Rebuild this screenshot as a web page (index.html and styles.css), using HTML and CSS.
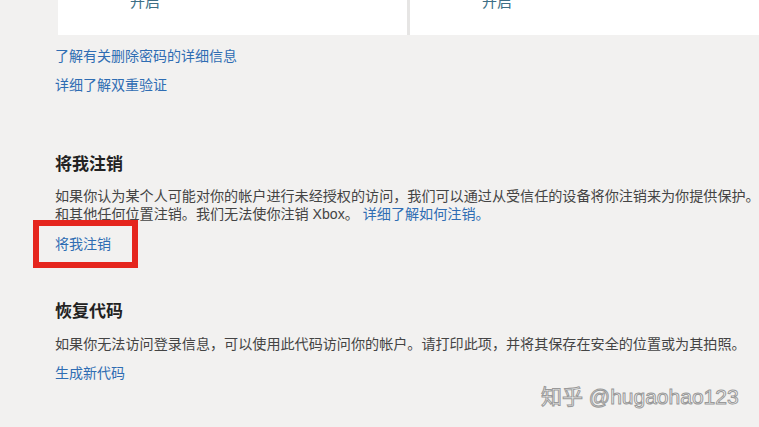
FILE: index.html
```html
<!DOCTYPE html>
<html lang="zh-CN">
<head>
  <meta charset="UTF-8">
  <meta name="viewport" content="width=device-width, initial-scale=1.0">
  <title>安全设置</title>
  <link rel="stylesheet" href="styles.css">
</head>
<body>
  <div class="page">
    <div class="card-row">
      <div class="card">
        <a class="card-link" href="#">开启</a>
      </div>
      <div class="card card-wide">
        <a class="card-link" href="#">开启</a>
      </div>
    </div>

    <div class="content">
      <a class="link first" href="#">了解有关删除密码的详细信息</a>
      <a class="link" href="#">详细了解双重验证</a>

      <section class="block">
        <h2>将我注销</h2>
        <p class="desc">如果你认为某个人可能对你的帐户进行未经授权的访问，我们可以通过从受信任的设备将你注销来为你提供保护。这将使你从所有设备、浏览器和其他任何位置注销。我们无法使你注销 Xbox。 <a href="#">详细了解如何注销。</a></p>
        <div class="highlight">
          <a class="link" href="#">将我注销</a>
        </div>
      </section>

      <section class="block block-second">
        <h2>恢复代码</h2>
        <p class="desc">如果你无法访问登录信息，可以使用此代码访问你的帐户。请打印此项，并将其保存在安全的位置或为其拍照。</p>
        <a class="link" href="#">生成新代码</a>
      </section>
    </div>
  </div>

  <div class="watermark">知乎 @hugaohao123</div>
</body>
</html>
```

FILE: styles.css
```css
html,
body {
  overflow: hidden;
}

body {
  margin: 0;
  padding: 0;
  background-color: #f2f1f0;
  font-family: "Liberation Sans", "Noto Sans CJK SC", sans-serif;
  font-size: 14px;
  color: #444;
  height: 427px;
  position: relative;
}

a {
  color: #2f6db3;
  text-decoration: none;
}

.card-row {
  display: flex;
  gap: 3px;
  margin-left: 58px;
  height: 35px;
  background-color: #e6e5e4;
}

.card {
  background-color: #fff;
  width: 351px;
  padding-left: 72px;
  box-sizing: border-box;
}

.card-wide {
  flex-grow: 1;
}

.card-link {
  display: block;
  margin-top: -8px;
  line-height: 20px;
  font-size: 15px;
  color: #3d6f86;
}

.content {
  padding-left: 55px;
}

.link {
  display: block;
  line-height: 20px;
  margin-top: 9px;
}

.link.first {
  margin-top: 11px;
}

.block {
  margin-top: 58px;
}

.block-second {
  margin-top: 32px;
}

h2 {
  margin: 0;
  font-size: 17px;
  line-height: 24px;
  font-weight: bold;
  color: #222;
}

.desc {
  margin: 10px 0 0;
  width: 895px;
  font-size: 14.1px;
  line-height: 18px;
}

.block-second .desc {
  margin-top: 11px;
}

.block-second .link {
  margin-top: 10px;
}

.highlight {
  display: inline-block;
  margin: -3px 0 0 -22px;
  padding: 8px 21px 8px 16px;
  border: 6px solid #e5251d;
}

.highlight .link {
  margin-top: 0;
}

.watermark {
  position: absolute;
  left: 541px;
  top: 384px;
  font-size: 21px;
  line-height: 26px;
  color: #fff;
  -webkit-text-stroke: 1px #999;
  white-space: nowrap;
}
```
